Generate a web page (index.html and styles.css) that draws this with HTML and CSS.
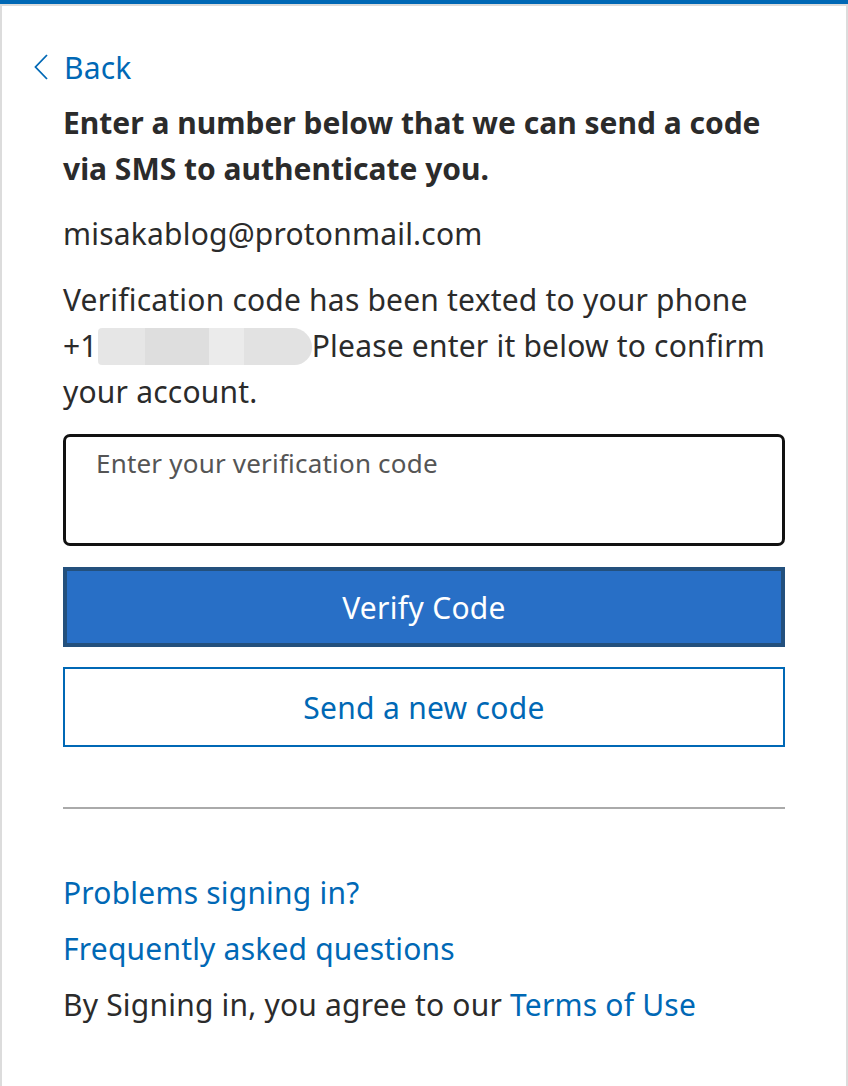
FILE: index.html
```html
<!DOCTYPE html>
<html lang="en">
<head>
<meta charset="utf-8">
<link rel="stylesheet" href="styles.css">
</head>
<body>
<div class="topbar"></div>
<main class="panel">
  <a class="back" href="#"><svg class="chev" width="16" height="26" viewBox="0 0 16 26"><path d="M14 1 L2.5 13 L14 25" fill="none" stroke="#0068b5" stroke-width="1.8"/></svg><span>Back</span></a>
  <div class="content">
    <h1 class="title">Enter a number below that we can send a code via SMS to authenticate you.</h1>
    <p class="email">misakablog@protonmail.com</p>
    <p class="msg">Verification code has been texted to your phone <span class="phone">+1<span class="blur"></span></span>Please enter it below to confirm your account.</p>
    <div class="field"><span class="placeholder">Enter your verification code</span></div>
    <button class="btn primary">Verify Code</button>
    <button class="btn secondary">Send a new code</button>
    <hr class="sep">
    <div class="links">
      <a href="#" class="link">Problems signing in?</a>
      <a href="#" class="link">Frequently asked questions</a>
      <p class="terms">By Signing in, you agree to our <a href="#" class="link">Terms of Use</a></p>
    </div>
  </div>
</main>
</body>
</html>
```
FILE: styles.css
```css
html, body { margin: 0; padding: 0; background: #fff; }
body {
  font-family: "Noto Sans", "Open Sans", sans-serif;
  color: #2b2b2b;
  width: 848px;
  height: 1086px;
  overflow: hidden;
  letter-spacing: 0.2px;
}
.topbar {
  height: 4px;
  background: #0068b5;
  border-bottom: 2px solid #dcdcdc;
}
.panel {
  border-left: 2px solid #dcdcdc;
  border-right: 2px solid #dcdcdc;
  height: 1080px;
  box-sizing: border-box;
}
.back {
  display: flex;
  align-items: center;
  gap: 15px;
  padding: 41px 0 0 31px;
  height: 40px;
  color: #0068b5;
  text-decoration: none;
  font-size: 30px;
}
.chev { flex: none; }
.content {
  padding: 0 61px;
}
.title {
  margin: 13px 0 0;
  font-size: 30px;
  font-weight: 700;
  line-height: 46px;
  letter-spacing: 0;
}
.email {
  margin: 19px 0 0;
  font-size: 30px;
  line-height: 46px;
}
.msg {
  margin: 20px 0 0;
  font-size: 30px;
  line-height: 46px;
}
.phone { white-space: nowrap; }
.blur {
  display: inline-block;
  vertical-align: -8px;
  width: 214px;
  height: 37px;
  background: linear-gradient(90deg, #e6e6e6 0 22%, #dedede 22% 52%, #ebebeb 52% 68%, #e2e2e2 68% 100%);
  border-radius: 4px 20px 18px 4px;
}
.field {
  margin-top: 19px;
  height: 112px;
  box-sizing: border-box;
  border: 3px solid #111;
  border-radius: 7px;
  padding: 8px 0 0 30px;
}
.placeholder { font-size: 26px; color: #555; }
.btn {
  display: block;
  width: 100%;
  box-sizing: border-box;
  font-family: inherit;
  font-size: 30px;
  letter-spacing: 0.3px;
  cursor: pointer;
}
.primary {
  margin-top: 21px;
  height: 80px;
  background: #286fc6;
  border: 4px solid #23507d;
  color: #fff;
}
.secondary {
  margin-top: 20px;
  height: 80px;
  background: #fff;
  border: 2px solid #0068b5;
  color: #0068b5;
}
.sep {
  margin: 60px 0 0;
  border: 0;
  border-top: 2px solid #aaa;
}
.links {
  margin-top: 61px;
  display: flex;
  flex-direction: column;
  align-items: flex-start;
  gap: 10px;
  font-size: 30px;
  line-height: 46px;
}
.link { color: #0068b5; text-decoration: none; }
.terms { margin: 0; }
```
